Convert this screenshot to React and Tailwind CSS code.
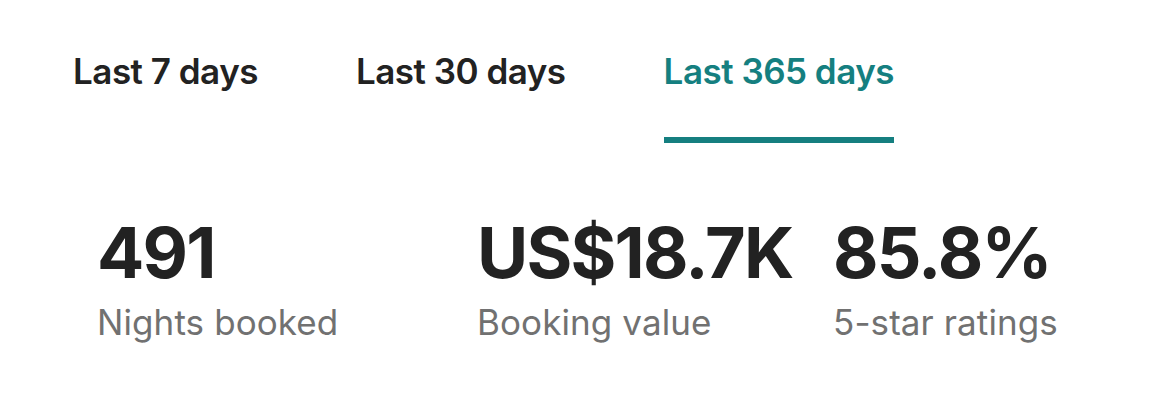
import React from "react";

const tabs = ["Last 7 days", "Last 30 days", "Last 365 days"];

const stats = [
  { value: "491", label: "Nights booked", width: "w-[380px]" },
  { value: "US$18.7K", label: "Booking value", width: "w-[356px]" },
  { value: "85.8%", label: "5-star ratings", width: "" },
];

export default function App() {
  const active = 2;
  return (
    <div className="w-[1157px] h-[408px] bg-white font-['Inter',sans-serif]">
      {/* Tabs */}
      <div className="flex gap-[98px] pl-[73px] pt-[51px]">
        {tabs.map((t, i) => (
          <div key={t} className="flex flex-col">
            <span
              className={`text-[35px] font-semibold tracking-[-0.5px] leading-[40px] ${
                i === active ? "text-[#157f80]" : "text-[#222222]"
              }`}
            >
              {t}
            </span>
            <div className={`mt-[46px] h-[6px] ${i === active ? "bg-[#157f80]" : "bg-transparent"}`} />
          </div>
        ))}
      </div>

      {/* Stats */}
      <div className="flex pl-[97px] pt-[75px]">
        {stats.map((s) => (
          <div key={s.label} className={`flex flex-col ${s.width}`}>
            <span className="text-[70px] font-bold leading-[70px] tracking-[-1.8px] text-[#222222]">
              {s.value}
            </span>
            <span className="mt-[14px] text-[35px] leading-[40px] tracking-[0.1px] text-[#717171]">{s.label}</span>
          </div>
        ))}
      </div>
    </div>
  );
}
